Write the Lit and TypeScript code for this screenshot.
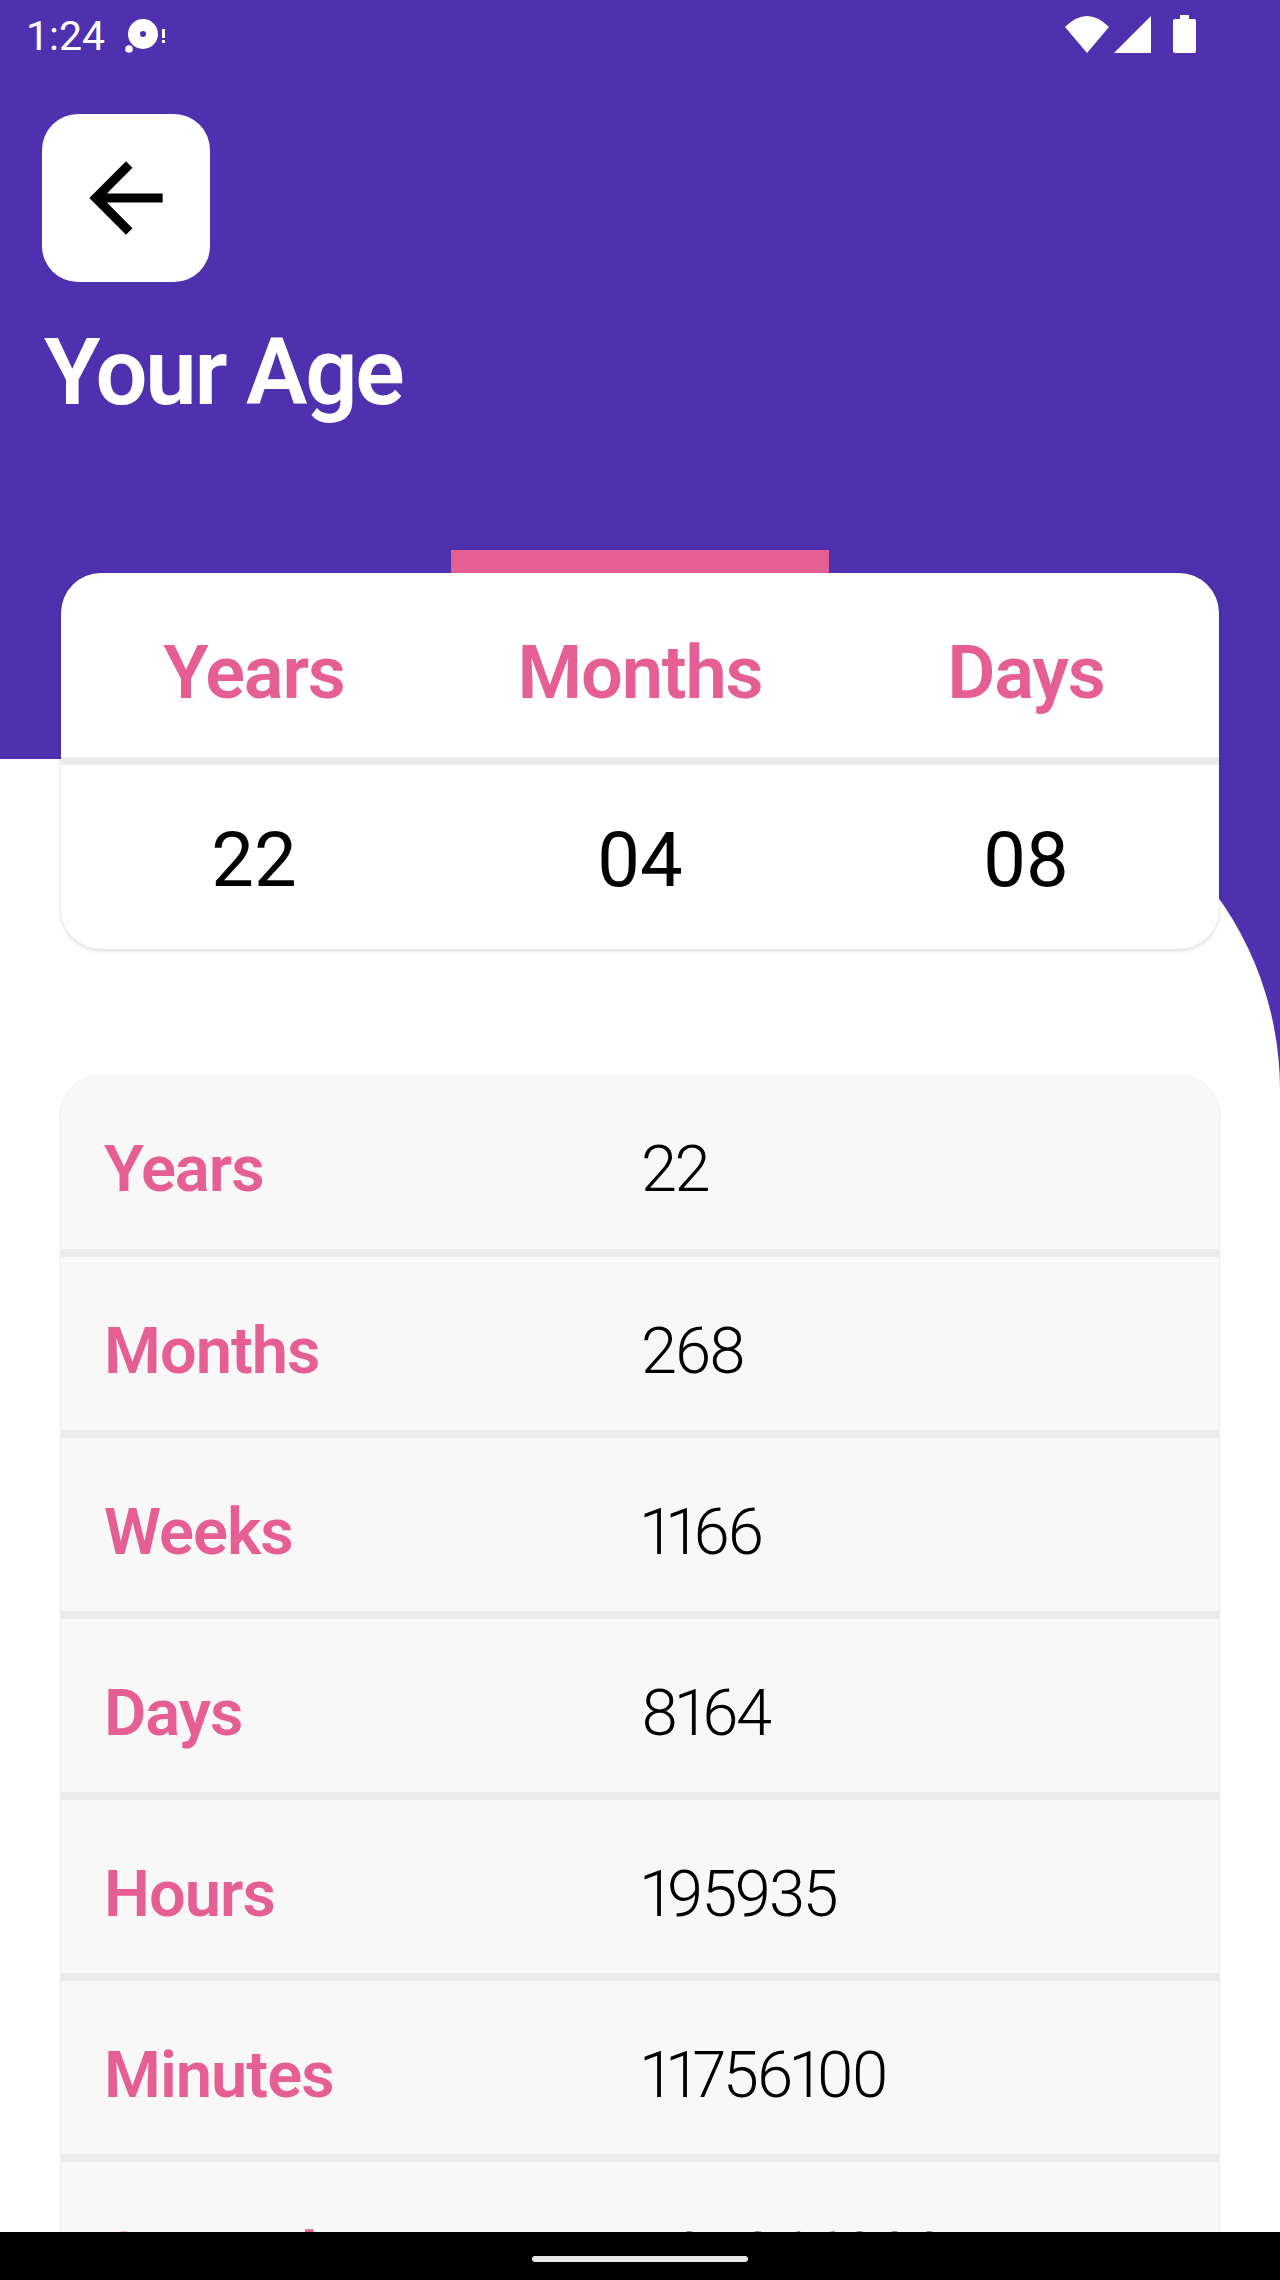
import { LitElement, html, css } from 'lit';
import { customElement } from 'lit/decorators.js';

const SUMMARY = [
  { label: 'Years', value: '22' },
  { label: 'Months', value: '04' },
  { label: 'Days', value: '08' },
];

const TOTALS = [
  { label: 'Years', value: '22' },
  { label: 'Months', value: '268' },
  { label: 'Weeks', value: '1166' },
  { label: 'Days', value: '8164' },
  { label: 'Hours', value: '195935' },
  { label: 'Minutes', value: '11756100' },
  { label: 'Seconds', value: '705366000' },
];

@customElement('app-root')
export class AppRoot extends LitElement {
  static styles = css`
    :host {
      display: block;
      font-family: Roboto, sans-serif;
    }
    .screen {
      position: relative;
      width: 1280px;
      height: 2280px;
      overflow: hidden;
      background: #4f30ae;
      display: flex;
      flex-direction: column;
    }
    .hero {
      height: 759px;
      flex: none;
      box-sizing: border-box;
      padding: 0 42px;
      color: #fff;
    }
    .status {
      display: flex;
      align-items: center;
      height: 68px;
      margin: 0 -16px;
      padding-right: 58px;
      font-size: 41px;
    }
    .status .time { width: 98px; padding-top: 4px; }
    .status .right { margin-left: auto; display: flex; gap: 5px; align-items: center; }
    .status svg { display: block; fill: #fff; }
    .status .battery { margin-left: 17px; }
    .back {
      margin-top: 46px;
      width: 168px;
      height: 168px;
      border-radius: 36px;
      background: #fff;
      display: flex;
      align-items: center;
      justify-content: center;
    }
    .title {
      margin: 39px 0 0 2px;
      font-size: 92px;
      font-weight: 600;
      line-height: 104px;
      letter-spacing: -2.2px;
    }
    .sheet {
      flex: 1;
      background: #fff;
      border-top-right-radius: 331px;
      display: flex;
      flex-direction: column;
      align-items: center;
    }
    .accent {
      width: 378px;
      height: 23px;
      margin-top: -209px;
      flex: none;
      background: #e55f94;
    }
    .summary {
      width: 1158px;
      height: 376px;
      flex: none;
      background: #fff;
      border-radius: 40px;
      box-shadow: 0 2px 4px rgba(0, 0, 0, 0.14);
      display: grid;
      grid-template-columns: repeat(3, 1fr);
      grid-template-rows: 184px 8px 1fr;
    }
    .summary .head {
      display: flex;
      align-items: center;
      justify-content: center;
      padding-top: 14px;
      color: #e55f94;
      font-weight: 600;
      font-size: 74px;
      letter-spacing: -1.2px;
    }
    .summary .rule { grid-column: 1 / -1; background: #ebebeb; }
    .summary .num {
      display: flex;
      align-items: center;
      justify-content: center;
      padding-top: 6px;
      font-size: 76px;
      color: #000;
    }
    .totals {
      width: 1158px;
      flex: none;
      margin-top: 126px;
      background: #f8f8f8;
      border-radius: 40px 40px 0 0;
      box-shadow: 0 1px 3px rgba(0, 0, 0, 0.18);
    }
    .row {
      height: 173px;
      display: flex;
      align-items: center;
      padding-left: 43px;
      border-bottom: 8px solid #ebebeb;
      font-size: 65px;
    }
    .row:first-child { height: 174px; }
    .row span { padding-top: 14px; }
    .row .name {
      width: 537px;
      color: #e55f94;
      font-weight: 600;
      letter-spacing: -1px;
    }
    .row .val {
      color: #000;
      font-weight: 350;
      font-variant-numeric: proportional-nums;
      letter-spacing: -2.5px;
    }
    .nav {
      position: absolute;
      left: 0;
      right: 0;
      bottom: 0;
      height: 48px;
      background: #000;
      display: flex;
      justify-content: center;
    }
    .pill {
      width: 216px;
      height: 6px;
      margin-top: 24px;
      border-radius: 3px;
      background: #e8e8e8;
    }
  `;

  render() {
    return html`
      <div class="screen">
        <div class="hero">
          <div class="status">
            <span class="time">1:24</span>
            <svg width="44" height="40" viewBox="0 0 44 40">
              <path
                fill-rule="evenodd"
                d="M19 5a15 15 0 1 0 0 30a15 15 0 1 0 0-30zM19 17a3 3 0 1 1 0 6a3 3 0 1 1 0-6z"
              />
              <circle cx="5" cy="35" r="3.8" />
              <rect x="38" y="15" width="3" height="9" />
              <rect x="38" y="26" width="3" height="3" />
            </svg>
            <div class="right">
              <svg width="44" height="37" viewBox="0 0 44 37"><path d="M0 11 Q22 -11 44 11 L22 37 Z" /></svg>
              <svg width="37" height="37" viewBox="0 0 37 37"><path d="M37 0 V37 H0 Z" /></svg>
              <svg class="battery" width="23" height="38" viewBox="0 0 23 38">
                <path d="M7 0 H16 V4 H21 Q23 4 23 6 V36 Q23 38 21 38 H2 Q0 38 0 36 V6 Q0 4 2 4 H7 Z" />
              </svg>
            </div>
          </div>
          <div class="back">
            <svg width="110" height="110" viewBox="0 0 24 24"><path d="M20 11H7.83l5.59-5.59L12 4l-8 8 8 8 1.41-1.41L7.83 13H20z" /></svg>
          </div>
          <div class="title">Your Age</div>
        </div>
        <div class="sheet">
          <div class="accent"></div>
          <div class="summary">
            ${SUMMARY.map((s) => html`<div class="head">${s.label}</div>`)}
            <div class="rule"></div>
            ${SUMMARY.map((s) => html`<div class="num">${s.value}</div>`)}
          </div>
          <div class="totals">
            ${TOTALS.map(
              (t) => html`<div class="row"><span class="name">${t.label}</span><span class="val">${t.value}</span></div>`
            )}
          </div>
        </div>
        <div class="nav"><div class="pill"></div></div>
      </div>
    `;
  }
}
